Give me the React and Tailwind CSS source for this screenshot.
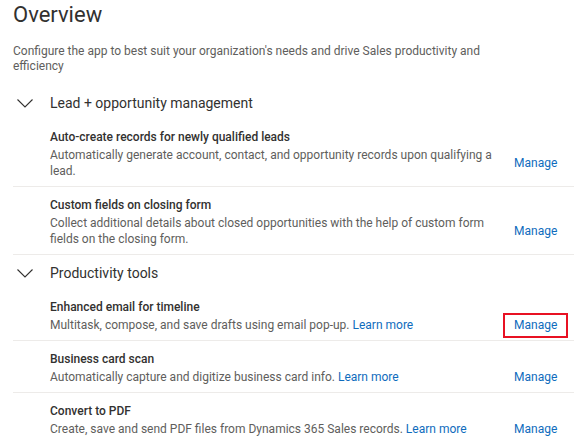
import React from "react";

const FONT = { fontFamily: '"Segoe UI", Roboto, "Noto Sans", sans-serif' };

const SECTIONS = [
  {
    title: "Lead + opportunity management",
    items: [
      {
        title: "Auto-create records for newly qualified leads",
        desc: "Automatically generate account, contact, and opportunity records upon qualifying a lead.",
      },
      {
        title: "Custom fields on closing form",
        desc: "Collect additional details about closed opportunities with the help of custom form fields on the closing form.",
      },
    ],
  },
  {
    title: "Productivity tools",
    items: [
      {
        title: "Enhanced email for timeline",
        desc: "Multitask, compose, and save drafts using email pop-up.",
        learn: true,
        highlight: true,
      },
      {
        title: "Business card scan",
        desc: "Automatically capture and digitize business card info.",
        learn: true,
      },
      {
        title: "Convert to PDF",
        desc: "Create, save and send PDF files from Dynamics 365 Sales records.",
        learn: true,
      },
    ],
  },
];

const Chevron = () => (
  <svg width="16" height="9" viewBox="0 0 16 9" fill="none" className="shrink-0">
    <path d="M0.5 0.5 L8 8 L15.5 0.5" stroke="#323130" strokeWidth="1.1" />
  </svg>
);

const Item = ({ item }) => (
  <div className="border-b border-[#edebe9] pl-[37px] pt-[9px] pb-[7px]">
    <div className="text-[12px] leading-[19px] font-medium text-[#323130]">{item.title}</div>
    <div className="flex items-center">
      <div className="w-[445px] text-[12px] leading-[16px] text-[#605e5c]">
        {item.desc}
        {item.learn && (
          <>
            {" "}
            <a className="text-[#0f6cbd]">Learn more</a>
          </>
        )}
      </div>
      <div className="pl-[8px]">
        <span
          className={
            "block my-[-5px] px-[9px] py-[3px] border-2 text-[12px] leading-[15px] text-[#0f6cbd] " +
            (item.highlight ? "border-[#e81123]" : "border-transparent")
          }
        >
          Manage
        </span>
      </div>
    </div>
  </div>
);

export default function App() {
  return (
    <div className="w-[587px] h-[444px] overflow-hidden bg-white px-[13px]" style={FONT}>
      <h1 className="text-[22px] leading-[30px] text-[#323130]">Overview</h1>
      <p className="mt-[14px] text-[12px] leading-[15px] text-[#605e5c] w-[470px]">
        Configure the app to best suit your organization's needs and drive Sales productivity and efficiency
      </p>
      <div className="mt-[11px]">
        {SECTIONS.map((s) => (
          <div key={s.title}>
            <div className="flex items-center gap-[17px] pl-[4px] h-[34px] pt-[2px]">
              <Chevron />
              <span className="text-[14px] text-[#323130]">{s.title}</span>
            </div>
            {s.items.map((it) => (
              <Item key={it.title} item={it} />
            ))}
          </div>
        ))}
      </div>
    </div>
  );
}
